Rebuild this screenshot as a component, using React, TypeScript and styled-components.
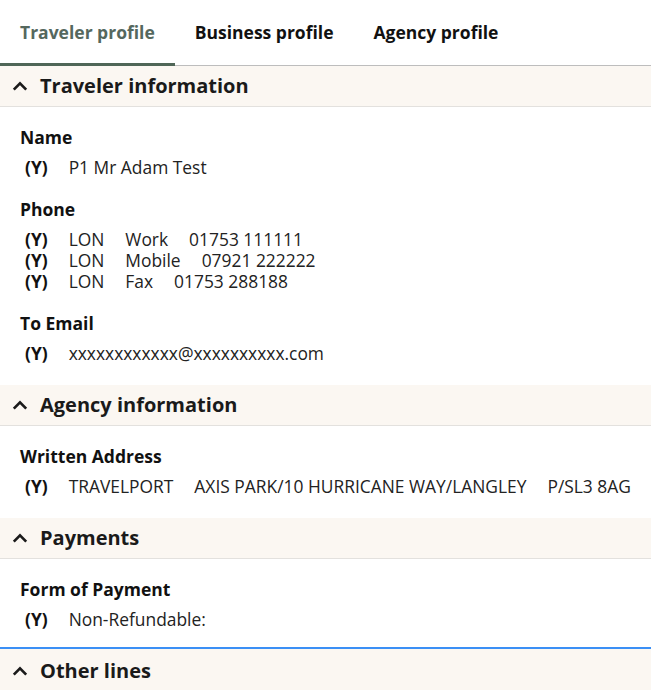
import React from "react";
import styled, { createGlobalStyle } from "styled-components";

const GlobalStyle = createGlobalStyle`
  body {
    margin: 0;
    background: #ffffff;
    font-family: "Open Sans", "Liberation Sans", sans-serif;
    color: #1b1b1b;
  }
`;

const Page = styled.div`
  width: 651px;
  height: 690px;
  overflow: hidden;
`;

const Tabs = styled.div`
  display: flex;
  height: 65px;
  border-bottom: 1px solid #bdbdbd;
`;

const Tab = styled.div<{ $active?: boolean }>`
  display: flex;
  align-items: center;
  padding: 0 20px 2px;
  font-size: 17.5px;
  font-weight: 700;
  color: ${p => (p.$active ? "#55685e" : "#111111")};
  box-shadow: ${p => (p.$active ? "inset 0 -3px 0 #4f6657" : "none")};
  margin-bottom: -1px;
`;

const SectionHeader = styled.div<{ $focused?: boolean }>`
  display: flex;
  align-items: center;
  gap: 12px;
  height: 39px;
  padding: ${p => (p.$focused ? "2px" : "0")} 12px 1px;
  background: #fbf7f2;
  border-bottom: 1px solid #e3e1de;
  border-top: ${p => (p.$focused ? "2px solid #3b8ff5" : "none")};
  font-size: 20px;
  font-weight: 700;
  color: #1a1a1a;
`;

const Body = styled.div<{ $bottom?: number }>`
  padding: 18px 20px ${p => p.$bottom ?? 21}px;
  display: flex;
  flex-direction: column;
  gap: 19px;
`;

const Group = styled.div`
  display: flex;
  flex-direction: column;
`;

const Label = styled.div`
  font-size: 17.5px;
  font-weight: 700;
  line-height: 24px;
  margin-bottom: 8px;
  color: #111111;
`;

const Row = styled.div`
  display: flex;
  gap: 21px;
  padding-left: 5px;
  font-size: 17.4px;
  line-height: 21px;
  color: #222222;
`;

const Flag = styled.span`
  font-weight: 700;
  color: #111111;
`;

const Chevron = () => (
  <svg width="16" height="10" viewBox="0 0 16 10">
    <path d="M1.8 8.6 L8 2.4 L14.2 8.6" fill="none" stroke="#1a1a1a" strokeWidth="2.7" />
  </svg>
);

const Section = ({ title, focused, children, bottom }: { title: string; focused?: boolean; children?: React.ReactNode; bottom?: number }) => (
  <>
    <SectionHeader $focused={focused}>
      <Chevron />
      {title}
    </SectionHeader>
    {children && <Body $bottom={bottom}>{children}</Body>}
  </>
);

const Line = ({ parts }: { parts: string[] }) => (
  <Row>
    <Flag>(Y)</Flag>
    {parts.map((p, i) => (
      <span key={i}>{p}</span>
    ))}
  </Row>
);

const App = () => (
  <Page>
    <GlobalStyle />
    <Tabs>
      <Tab $active>Traveler profile</Tab>
      <Tab>Business profile</Tab>
      <Tab>Agency profile</Tab>
    </Tabs>
    <Section title="Traveler information">
      <Group>
        <Label>Name</Label>
        <Line parts={["P1 Mr Adam Test"]} />
      </Group>
      <Group>
        <Label>Phone</Label>
        <Line parts={["LON", "Work", "01753 111111"]} />
        <Line parts={["LON", "Mobile", "07921 222222"]} />
        <Line parts={["LON", "Fax", "01753 288188"]} />
      </Group>
      <Group>
        <Label>To Email</Label>
        <Line parts={["xxxxxxxxxxxx@xxxxxxxxxx.com"]} />
      </Group>
    </Section>
    <Section title="Agency information">
      <Group>
        <Label>Written Address</Label>
        <Line parts={["TRAVELPORT", "AXIS PARK/10 HURRICANE WAY/LANGLEY", "P/SL3 8AG"]} />
      </Group>
    </Section>
    <Section title="Payments" bottom={17}>
      <Group>
        <Label>Form of Payment</Label>
        <Line parts={["Non-Refundable:"]} />
      </Group>
    </Section>
    <Section title="Other lines" focused />
  </Page>
);

export default App;
